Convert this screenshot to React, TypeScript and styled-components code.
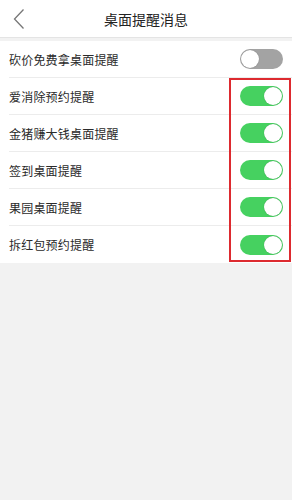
import React, { useState } from "react";
import styled, { createGlobalStyle } from "styled-components";

const GlobalStyle = createGlobalStyle`
  html, body {
    margin: 0;
    padding: 0;
    background: #f2f2f2;
    font-family: "Noto Sans CJK SC", "Noto Sans", sans-serif;
  }
`;

const Page = styled.div`
  width: 292px;
  height: 500px;
  background: #f2f2f2;
`;

const Header = styled.header`
  height: 37px;
  background: #fff;
  border-bottom: 1px solid #e4e4e4;
  display: flex;
  align-items: center;
  justify-content: center;
  position: relative;
`;

const BackButton = styled.button`
  position: absolute;
  left: 9px;
  top: 7px;
  border: none;
  background: transparent;
  padding: 0;
  width: 20px;
  height: 24px;
  display: flex;
  align-items: center;
  justify-content: center;
`;

const Title = styled.h1`
  margin: 0;
  font-size: 14px;
  font-weight: 400;
  color: #222;
`;

const List = styled.section`
  margin-top: 3px;
  background: #fff;
  position: relative;
`;

const Row = styled.div<{ $last?: boolean }>`
  height: 37px;
  display: flex;
  align-items: center;
  justify-content: space-between;
  margin-left: 9px;
  padding-right: 9px;
  border-bottom: ${(p) => (p.$last ? "none" : "1px solid #ececec")};
  box-sizing: border-box;
`;

const Label = styled.span`
  font-size: 12px;
  letter-spacing: 0.2px;
  color: #2a2a2a;
`;

const Switch = styled.button<{ $on: boolean }>`
  width: 43px;
  height: 20px;
  border-radius: 10px;
  border: none;
  padding: 1px;
  background: ${(p) => (p.$on ? "#46d160" : "#a3a3a3")};
  display: flex;
  justify-content: ${(p) => (p.$on ? "flex-end" : "flex-start")};
  align-items: center;
  box-sizing: border-box;
  cursor: pointer;
`;

const Knob = styled.span`
  width: 18px;
  height: 18px;
  border-radius: 50%;
  background: #fff;
  box-shadow: 0 0 1px rgba(0, 0, 0, 0.35);
`;

const Highlight = styled.div`
  position: absolute;
  left: 229px;
  top: 37px;
  width: 62px;
  height: 184px;
  border: 2px solid #dd2a2f;
  box-sizing: border-box;
  pointer-events: none;
`;

const items = [
  { label: "砍价免费拿桌面提醒", on: false },
  { label: "爱消除预约提醒", on: true },
  { label: "金猪赚大钱桌面提醒", on: true },
  { label: "签到桌面提醒", on: true },
  { label: "果园桌面提醒", on: true },
  { label: "拆红包预约提醒", on: true },
];

export default function App() {
  const [state, setState] = useState(items.map((i) => i.on));

  return (
    <Page>
      <GlobalStyle />
      <Header>
        <BackButton aria-label="back">
          <svg width="12" height="22" viewBox="0 0 12 22">
            <path d="M10.5 1.5 L1.5 11 L10.5 20.5" fill="none" stroke="#777" strokeWidth="1.3" />
          </svg>
        </BackButton>
        <Title>桌面提醒消息</Title>
      </Header>
      <List>
        {items.map((item, i) => (
          <Row key={item.label} $last={i === items.length - 1}>
            <Label>{item.label}</Label>
            <Switch
              $on={state[i]}
              onClick={() => setState((s) => s.map((v, j) => (j === i ? !v : v)))}
            >
              <Knob />
            </Switch>
          </Row>
        ))}
        <Highlight />
      </List>
    </Page>
  );
}
